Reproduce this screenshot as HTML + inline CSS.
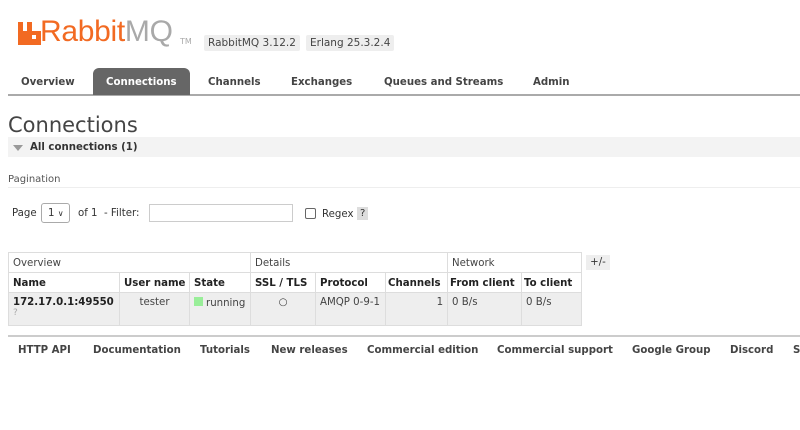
<!DOCTYPE html>
<html><head><style>
*{margin:0;padding:0;box-sizing:border-box}
body{width:800px;height:430px;background:#fff;font-family:"DejaVu Sans","Liberation Sans",sans-serif;font-size:10.2px;color:#333;position:relative;overflow:hidden}
.a{position:absolute;white-space:nowrap}
.b{font-weight:bold}
.tag{background:#eee;border-radius:2px;padding:2px 4px;color:#444;font-size:10.5px}
.tab{position:absolute;top:69px;height:27px;line-height:27px;font-weight:bold;color:#444;font-size:10.2px}
table{position:absolute;left:8px;top:252px;border-collapse:collapse;font-size:10.2px;table-layout:fixed;width:573px}
td,th{border:1px solid #ddd;padding:1px 4px 0;text-align:left;white-space:nowrap;overflow:hidden}
.g td{height:20px;font-weight:normal;color:#444}
.h th{height:20px;color:#222}
.d td{height:33px;vertical-align:top;padding-top:4px;background:#eee;color:#444}
.f{position:absolute;top:345px;font-weight:bold;color:#444;font-size:10.2px}
</style></head><body>
<svg class="a" style="left:18px;top:22px" width="23" height="23" viewBox="0 0 23 23"><path d="M0 0h5v9h4V0h5v9h9v14H0z M14 13v4h4v-4z" fill="#f26a22" fill-rule="evenodd"/></svg>
<div class="a" style="left:40px;top:15px;font-family:'Liberation Sans',sans-serif;font-size:30px;color:#f26a22;letter-spacing:-0.3px">Rabbit<span style="color:#a9a9a9">MQ</span></div>
<div class="a" style="left:180px;top:37px;font-size:8px;color:#aaa">TM</div>
<div class="a tag" style="left:204px;top:35px">RabbitMQ 3.12.2</div>
<div class="a tag" style="left:306px;top:35px">Erlang 25.3.2.4</div>
<div class="a" style="left:8px;top:94px;width:792px;height:2px;background:#aaa"></div>
<div class="a" style="left:93px;top:68px;width:97px;height:27px;background:#666;border-radius:6px 6px 0 0"></div>
<div class="tab" style="left:21px">Overview</div>
<div class="tab" style="left:106px;color:#fff">Connections</div>
<div class="tab" style="left:208px">Channels</div>
<div class="tab" style="left:291px">Exchanges</div>
<div class="tab" style="left:384px">Queues and Streams</div>
<div class="tab" style="left:533px">Admin</div>
<div class="a" style="left:8px;top:113px;font-size:21px;color:#444">Connections</div>
<div class="a" style="left:8px;top:137px;width:792px;height:20px;background:#f3f3f3"></div>
<div class="a" style="left:13px;top:145px;width:0;height:0;border-left:5px solid transparent;border-right:5px solid transparent;border-top:6px solid #999"></div>
<div class="a b" style="left:30px;top:142px;color:#333">All connections (1)</div>
<div class="a" style="left:8px;top:174px;color:#555;font-size:10px">Pagination</div>
<div class="a" style="left:8px;top:187px;width:792px;height:1px;background:#eee"></div>
<div class="a" style="left:12px;top:208px">Page</div>
<div class="a" style="left:41px;top:203px;width:29px;height:20px;border:1px solid #aaa;border-radius:3px;padding:4px 0 0 6px">1 <span style="font-size:8px">&#8744;</span></div>
<div class="a" style="left:78px;top:208px">of 1 &nbsp;- Filter:</div>
<div class="a" style="left:149px;top:204px;width:144px;height:18px;border:1px solid #ccc"></div>
<div class="a" style="left:305px;top:208px;width:11px;height:11px;border:1px solid #666;border-radius:2px"></div>
<div class="a" style="left:322px;top:209px">Regex</div>
<div class="a" style="left:357px;top:207px;background:#ddd;padding:1px 3px;font-size:10px">?</div>
<table>
<colgroup><col style="width:111px"><col style="width:70px"><col style="width:61px"><col style="width:65px"><col style="width:70px"><col style="width:62px"><col style="width:74px"><col style="width:60px"></colgroup>
<tr class="g"><td colspan="3">Overview</td><td colspan="3">Details</td><td colspan="2">Network</td></tr>
<tr class="h"><th>Name</th><th>User name</th><th>State</th><th>SSL / TLS</th><th>Protocol</th><th style="padding:1px 2px 0">Channels</th><th style="padding:1px 2px 0">From client</th><th style="padding:1px 2px 0">To client</th></tr>
<tr class="d"><td><b style="color:#222">172.17.0.1:49550</b><div style="font-size:9px;color:#aaa">?</div></td><td style="text-align:center">tester</td><td><span style="display:inline-block;width:9px;height:9px;background:#9e9;margin-right:3px"></span>running</td><td style="text-align:center">○</td><td>AMQP 0-9-1</td><td style="text-align:right">1</td><td>0 B/s</td><td>0 B/s</td></tr>
</table>
<div class="a" style="left:586px;top:255px;width:24px;height:15px;background:#eee;text-align:center;line-height:15px">+/-</div>
<div class="a" style="left:8px;top:335px;width:792px;height:2px;background:#ccc"></div>
<div class="f" style="left:18px">HTTP API</div>
<div class="f" style="left:93px">Documentation</div>
<div class="f" style="left:200px">Tutorials</div>
<div class="f" style="left:271px">New releases</div>
<div class="f" style="left:367px">Commercial edition</div>
<div class="f" style="left:497px">Commercial support</div>
<div class="f" style="left:632px">Google Group</div>
<div class="f" style="left:730px">Discord</div>
<div class="f" style="left:793px">S</div>
</body></html>
